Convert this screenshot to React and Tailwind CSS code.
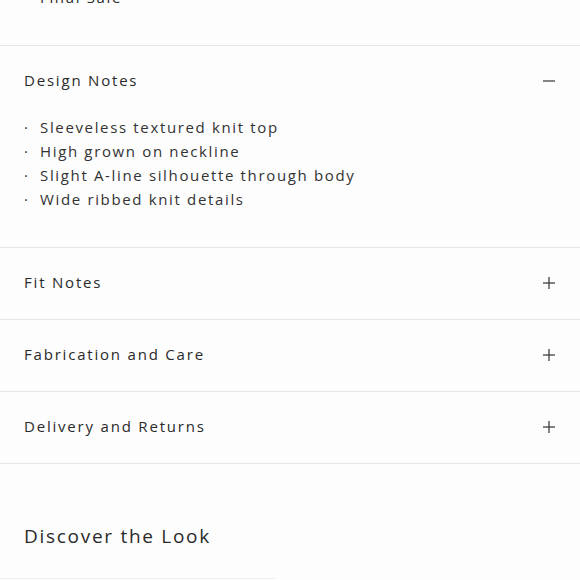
import React, { useState } from 'react';

const sections = [
  {
    title: 'Design Notes',
    items: [
      'Sleeveless textured knit top',
      'High grown on neckline',
      'Slight A-line silhouette through body',
      'Wide ribbed knit details',
    ],
  },
  { title: 'Fit Notes', items: [] },
  { title: 'Fabrication and Care', items: [] },
  { title: 'Delivery and Returns', items: [] },
];

const PlusMinus = ({ open }) => (
  <svg width="14" height="14" viewBox="0 0 14 14" className="text-[#333]">
    <line x1="1" y1="7" x2="13" y2="7" stroke="currentColor" strokeWidth="1.2" />
    {!open && <line x1="7" y1="1" x2="7" y2="13" stroke="currentColor" strokeWidth="1.2" />}
  </svg>
);

const App = () => {
  const [open, setOpen] = useState(0);

  return (
    <div className="min-h-screen bg-[#fdfdfd] text-[#2a2a2a] font-['Open_Sans',sans-serif] overflow-hidden">
      {/* tail of the previous section */}
      <div className="-mt-[15px] pb-[36px] px-6">
        <ul className="text-[15px] leading-6 tracking-[0.11em]">
          <li className="flex">
            <span className="w-4 shrink-0">·</span>
            <span>Final Sale</span>
          </li>
        </ul>
      </div>

      {sections.map((s, i) => (
        <div key={s.title} className="border-t border-[#e6e6e6]">
          <button
            onClick={() => setOpen(open === i ? -1 : i)}
            className="w-full h-[71px] pb-[2px] flex items-center justify-between px-6 text-left"
          >
            <span className="text-[15px] tracking-[0.12em]">{s.title}</span>
            <PlusMinus open={open === i} />
          </button>
          {open === i && s.items.length > 0 && (
            <ul className="px-6 pb-9 -mt-[2px] text-[15px] leading-6 tracking-[0.11em] text-[#333]">
              {s.items.map((it) => (
                <li key={it} className="flex">
                  <span className="w-4 shrink-0">·</span>
                  <span>{it}</span>
                </li>
              ))}
            </ul>
          )}
        </div>
      ))}

      <div className="border-t border-[#e6e6e6] px-6 pt-[60px] pb-[30px]">
        <h2 className="text-[19px] tracking-[0.09em] leading-6">Discover the Look</h2>
      </div>
      <div className="w-[275px] border-t border-[#eeeeee]" />
    </div>
  );
};

export default App;
